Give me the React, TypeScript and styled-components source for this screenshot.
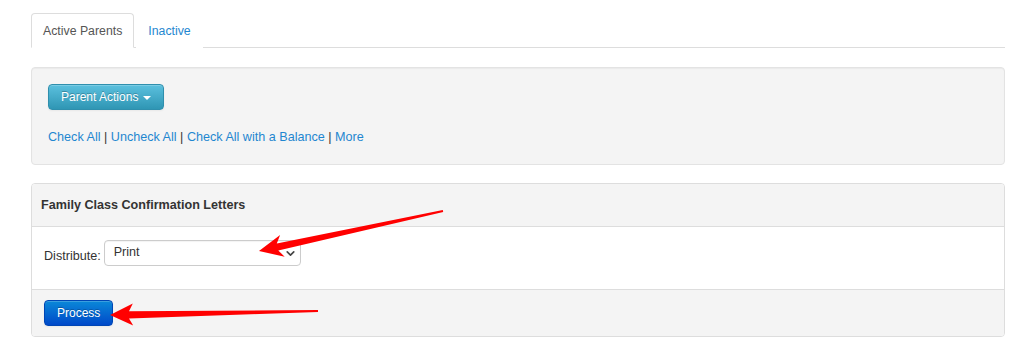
import React, { useState } from 'react';
import styled, { createGlobalStyle } from 'styled-components';
import { ChevronDown } from 'lucide-react';

const GlobalStyle = createGlobalStyle`
  body {
    margin: 0;
    background: #fff;
    font-family: "Liberation Sans", Arial, sans-serif;
    font-size: 12.6px;
    color: #333;
  }
`;

const Page = styled.div`
  position: relative;
  width: 1016px;
  height: 344px;
  box-sizing: border-box;
  padding: 13px 11px 0 31px;
`;

const TabBar = styled.ul`
  display: flex;
  gap: 2px;
  margin: 0 0 19px;
  padding: 0;
  list-style: none;
  border-bottom: 1px solid #ddd;
`;

const Tab = styled.li<{ $active?: boolean }>`
  margin-bottom: -1px;
  padding: 7px 11px 6px;
  line-height: 20px;
  font-size: 12.3px;
  border: 1px solid ${p => (p.$active ? '#ddd' : 'transparent')};
  border-bottom-color: ${p => (p.$active ? '#fff' : 'transparent')};
  border-radius: 4px 4px 0 0;
  background: #fff;
  color: ${p => (p.$active ? '#555' : '#1f87d0')};
  cursor: pointer;
`;

const Well = styled.div`
  background: #f4f4f4;
  border: 1px solid #e3e3e3;
  border-radius: 4px;
  padding: 16px 16px 19px;
  margin-bottom: 18px;
  box-shadow: inset 0 1px 1px rgba(0, 0, 0, 0.04);
`;

const Btn = styled.button<{ $variant: 'info' | 'primary' }>`
  display: inline-flex;
  align-items: center;
  gap: 5px;
  height: 26px;
  padding: 0 12px;
  font-family: inherit;
  font-size: 12px;
  color: #fff;
  text-shadow: 0 -1px 0 rgba(0, 0, 0, 0.25);
  border-radius: 4px;
  cursor: pointer;
  border: 1px solid
    ${p => (p.$variant === 'info' ? '#2f8fad' : '#0046b5')};
  background: ${p =>
    p.$variant === 'info'
      ? 'linear-gradient(#5bc0de, #2f96b4)'
      : 'linear-gradient(#0a88d8, #0049c9)'};
  box-shadow: inset 0 1px 0 rgba(255, 255, 255, 0.2), 0 1px 2px rgba(0, 0, 0, 0.05);
`;

const Caret = styled.span`
  width: 0;
  height: 0;
  border-left: 4px solid transparent;
  border-right: 4px solid transparent;
  border-top: 4px solid #fff;
  margin-top: 1px;
`;

const LinkRow = styled.div`
  margin-top: 19px;
  line-height: 16px;
  color: #333;
`;

const Link = styled.a`
  color: #1f87d0;
  text-decoration: none;
  cursor: pointer;
`;

const Panel = styled.div`
  border: 1px solid #ddd;
  border-radius: 4px;
  overflow: hidden;
`;

const PanelHeading = styled.div`
  background: #f4f4f4;
  border-bottom: 1px solid #ddd;
  height: 42px;
  padding: 0 9px;
  display: flex;
  align-items: center;
  font-weight: bold;
  color: #333;
`;

const PanelBody = styled.div`
  background: #fff;
  height: 63px;
  box-sizing: border-box;
  padding: 13px 12px 0;
  display: flex;
  align-items: flex-start;
  gap: 3px;
  border-bottom: 1px solid #ddd;
`;

const Label = styled.label`
  color: #333;
  padding-top: 9px;
`;

const SelectWrap = styled.div`
  position: relative;
  width: 197px;
`;

const Select = styled.select`
  appearance: none;
  width: 100%;
  height: 26px;
  padding: 0 24px 3px 9px;
  font-family: inherit;
  font-size: 12.6px;
  color: #333;
  background: #fff;
  border: 1px solid #ccc;
  border-radius: 4px;
  box-shadow: inset 0 1px 1px rgba(0, 0, 0, 0.05);
`;

const SelectIcon = styled.span`
  position: absolute;
  right: 4px;
  top: 7px;
  display: flex;
  color: #444;
  pointer-events: none;
`;

const PanelFooter = styled.div`
  background: #f4f4f4;
  height: 46px;
  padding: 0 12px;
  display: flex;
  align-items: center;
`;

const Overlay = styled.svg`
  position: absolute;
  left: 0;
  top: 0;
  pointer-events: none;
`;

const arrow1 =
  '259,251 280.1,235.1 276.8,243.6 442.8,210 443.2,212 278.3,250.4 284.7,256.7';
const arrow2 =
  '110,315 132.8,303.6 129,311.3 318,310 318,312 129,318.6 133.2,325.6';

const App = () => {
  const [tab, setTab] = useState('active');
  const [mode, setMode] = useState('print');

  return (
    <Page>
      <GlobalStyle />
      <TabBar>
        <Tab $active={tab === 'active'} onClick={() => setTab('active')}>
          Active Parents
        </Tab>
        <Tab $active={tab === 'inactive'} onClick={() => setTab('inactive')}>
          Inactive
        </Tab>
      </TabBar>

      <Well>
        <Btn $variant="info">
          Parent Actions <Caret />
        </Btn>
        <LinkRow>
          <Link>Check All</Link> | <Link>Uncheck All</Link> |{' '}
          <Link>Check All with a Balance</Link> | <Link>More</Link>
        </LinkRow>
      </Well>

      <Panel>
        <PanelHeading>Family Class Confirmation Letters</PanelHeading>
        <PanelBody>
          <Label htmlFor="distribute">Distribute:</Label>
          <SelectWrap>
            <Select id="distribute" value={mode} onChange={e => setMode(e.target.value)}>
              <option value="print">Print</option>
              <option value="email">Email</option>
            </Select>
            <SelectIcon>
              <ChevronDown size={13} strokeWidth={3} />
            </SelectIcon>
          </SelectWrap>
        </PanelBody>
        <PanelFooter>
          <Btn $variant="primary">Process</Btn>
        </PanelFooter>
      </Panel>

      <Overlay width="1016" height="344" viewBox="0 0 1016 344">
        <defs>
          <filter id="soft" x="-10%" y="-50%" width="120%" height="200%">
            <feGaussianBlur stdDeviation="0.6" />
          </filter>
        </defs>
        <g fill="#ff0000" filter="url(#soft)">
          <polygon points={arrow1} />
          <polygon points={arrow2} />
        </g>
      </Overlay>
    </Page>
  );
};

export default App;
